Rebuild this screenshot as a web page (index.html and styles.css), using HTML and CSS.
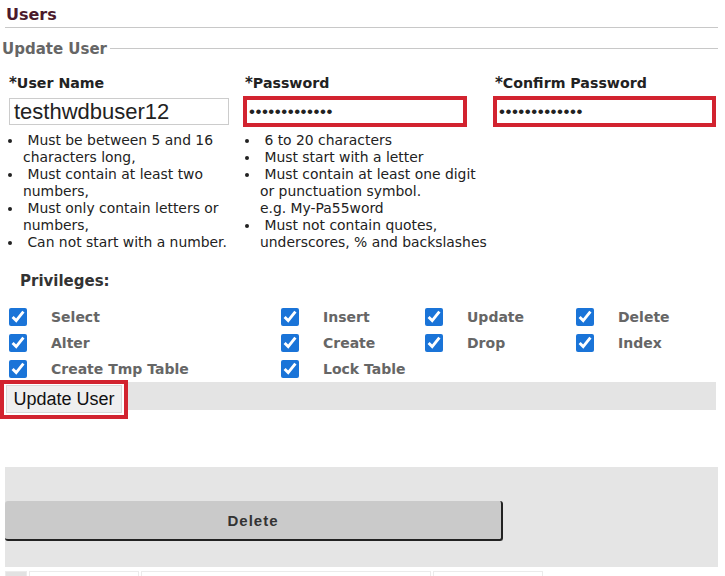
FILE: index.html
```html
<!DOCTYPE html>
<html lang="en">
<head>
    <meta charset="UTF-8">
    <title>Users</title>
    <link rel="stylesheet" href="styles.css">
</head>
<body>
<div class="page">
    <h2 class="title">Users</h2>
    <fieldset class="panel">
        <legend>Update User</legend>
        <div class="fields">
            <div class="col col-name">
                <label><span class="req">*</span>User Name</label>
                <input type="text" class="txt" value="testhwdbuser12">
                <ul class="rules">
                    <li>&nbsp;Must be between 5 and 16 characters long,</li>
                    <li>&nbsp;Must contain at least two numbers,</li>
                    <li>&nbsp;Must only contain letters or numbers,</li>
                    <li>&nbsp;Can not start with a number.</li>
                </ul>
            </div>
            <div class="col col-pw">
                <label><span class="req">*</span>Password</label>
                <input type="password" class="txt marked" value="testhwdbuser1">
                <ul class="rules">
                    <li>&nbsp;6 to 20 characters</li>
                    <li>&nbsp;Must start with a letter</li>
                    <li>&nbsp;Must contain at least one digit or punctuation symbol.<br>e.g. My-Pa55word</li>
                    <li>&nbsp;Must not contain quotes, underscores, % and backslashes</li>
                </ul>
            </div>
            <div class="col col-confirm">
                <label><span class="req">*</span>Confirm Password</label>
                <input type="password" class="txt marked" value="testhwdbuser1">
            </div>
        </div>

        <div class="privs-title">Privileges:</div>
        <div class="privs">
            <label class="priv"><input type="checkbox" checked><span>Select</span></label>
            <label class="priv"><input type="checkbox" checked><span>Insert</span></label>
            <label class="priv"><input type="checkbox" checked><span>Update</span></label>
            <label class="priv"><input type="checkbox" checked><span>Delete</span></label>
            <label class="priv"><input type="checkbox" checked><span>Alter</span></label>
            <label class="priv"><input type="checkbox" checked><span>Create</span></label>
            <label class="priv"><input type="checkbox" checked><span>Drop</span></label>
            <label class="priv"><input type="checkbox" checked><span>Index</span></label>
            <label class="priv"><input type="checkbox" checked><span>Create Tmp Table</span></label>
            <label class="priv"><input type="checkbox" checked><span>Lock Table</span></label>
        </div>

        <div class="actions">
            <span class="mark"><button type="button" class="btn-update">Update User</button></span>
        </div>
    </fieldset>

    <div class="danger">
        <button type="button" class="btn-delete">Delete</button>
    </div>
    <div class="footer-strip">
        <span></span><span></span><span class="wide"></span><span></span>
    </div>
</div>
</body>
</html>
```

FILE: styles.css
```css
* {
    margin: 0;
    padding: 0;
    box-sizing: border-box;
}

body {
    font-family: "DejaVu Sans", Verdana, sans-serif;
    color: #222;
    background: #fff;
}

.page {
    width: 718px;
}

.title {
    font-size: 16px;
    line-height: 20px;
    color: #4b1a2c;
    padding: 5px 0 2px 1px;
    margin-left: 5px;
    border-bottom: 1px solid #c8c8c8;
}

.panel {
    border: 0;
    border-top: 1px solid #c8c8c8;
    margin-top: 10px;
    padding: 0;
    min-width: 0;
}

.panel legend {
    font-size: 15px;
    font-weight: bold;
    color: #666;
    padding: 2px 3px 0 2px;
    line-height: 18px;
}

.fields {
    display: grid;
    grid-template-columns: 234px 250px 1fr;
    padding: 16px 0 0 9px;
}

.col label {
    display: block;
    font-size: 14.2px;
    font-weight: bold;
    line-height: 18px;
    color: #222;
}

.col-pw label,
.col-confirm label {
    padding-left: 2px;
}

.req {
    font-size: 15px;
}

.txt {
    display: block;
    margin-top: 6px;
    width: 220px;
    height: 27px;
    border: 1px solid #ccc;
    padding: 0 4px;
    font-family: "Liberation Sans", Arial, sans-serif;
    font-size: 22px;
    color: #222;
    outline: none;
}

.txt.marked {
    width: 224px;
    height: 31px;
    margin-top: 4px;
    border: 4px solid #d2232f;
    font-size: 17px;
    letter-spacing: 0.5px;
    padding: 0 2px;
}

.col-confirm .txt.marked {
    width: 223px;
}

.rules {
    margin-top: 7px;
    padding-left: 14px;
    font-size: 13.9px;
    line-height: 17px;
    color: #222;
}

.col-pw .rules {
    margin-top: 5px;
    padding-left: 17px;
}

.privs-title {
    font-size: 15px;
    font-weight: bold;
    color: #333;
    line-height: 18px;
    padding: 21px 0 0 20px;
}

.privs {
    display: grid;
    grid-template-columns: 272px 144px 151px 1fr;
    row-gap: 8px;
    padding: 18px 0 0 9px;
}

.priv {
    display: flex;
    align-items: center;
    height: 18px;
    font-size: 14px;
    font-weight: bold;
    color: #666;
}

.priv input {
    width: 18px;
    height: 18px;
    margin: 0;
    accent-color: #1a74d8;
}

.priv span {
    margin-left: 24px;
}

.actions {
    margin-top: 4px;
    height: 28px;
    background: #e4e4e4;
    width: 716px;
}

.mark {
    display: inline-block;
    border: 4px solid #d2232f;
    padding: 1px 2px 2px 2px;
    margin-top: -2px;
    background: #fff;
}

.btn-update {
    display: block;
    font-family: "Liberation Sans", Arial, sans-serif;
    font-size: 18px;
    line-height: 26px;
    padding: 0 4px;
    width: 116px;
    background: #efefef;
    border: 1px solid #d8d8d8;
    color: #111;
}

.danger {
    margin: 57px 0 0 5px;
    height: 100px;
    background: #e5e5e5;
    padding-top: 34px;
}

.btn-delete {
    display: block;
    width: 498px;
    height: 40px;
    background: #cacaca;
    border: 0;
    border-right: 2px solid #222;
    border-bottom: 2px solid #222;
    border-radius: 3px;
    font-family: "Liberation Sans", Arial, sans-serif;
    font-size: 15px;
    font-weight: bold;
    letter-spacing: 1px;
    color: #333;
}

.footer-strip {
    display: flex;
    gap: 2px;
    margin: 4px 0 0 5px;
    height: 6px;
}

.footer-strip span {
    width: 110px;
    border: 1px solid #ebebeb;
    border-bottom: 0;
}

.footer-strip span:first-child {
    width: 22px;
    background: #e2e2e2;
}

.footer-strip .wide {
    width: 290px;
}
```
